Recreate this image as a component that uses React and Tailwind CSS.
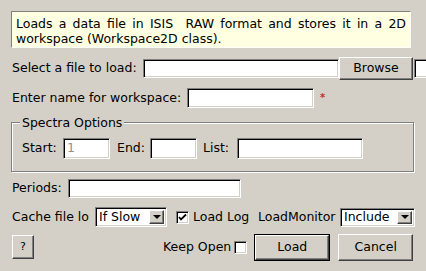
const sunken =
  "bg-white border border-t-[#808080] border-l-[#808080] border-b-white border-r-white shadow-[inset_1px_1px_0_#000,inset_-1px_-1px_0_#d4d0c8]";
const raised =
  "bg-[#d4d0c8] border border-t-white border-l-white border-b-[#404040] border-r-[#404040] shadow-[inset_-1px_-1px_0_#808080]";

function Field({ className = "", children }) {
  return (
    <div className={`${sunken} ${className} shrink-0 flex items-center px-[3px]`}>
      {children}
    </div>
  );
}

function Combo({ value, className = "" }) {
  return (
    <div className={`${sunken} ${className} shrink-0 flex items-center p-[2px]`}>
      <span className="flex-1 pl-[1px] leading-none">{value}</span>
      <div className={`${raised} w-[15px] h-full flex items-center justify-center`}>
        <div className="w-0 h-0 border-l-[4px] border-r-[4px] border-t-[4px] border-l-transparent border-r-transparent border-t-black" />
      </div>
    </div>
  );
}

function Check({ checked }) {
  return (
    <div className={`${sunken} w-[13px] h-[13px] flex items-center justify-center`}>
      {checked && (
        <svg width="9" height="9" viewBox="0 0 9 9">
          <path d="M1 4 L3 6.5 L8 1.5" stroke="#000" strokeWidth="1.8" fill="none" />
        </svg>
      )}
    </div>
  );
}

export default function App() {
  return (
    <div
      className="w-[426px] h-[271px] bg-[#d4d0c8] overflow-hidden text-black text-[12.5px]"
      style={{ fontFamily: '"DejaVu Sans", sans-serif' }}
    >
      <div className="ml-[11px] mt-[11px] w-[400px] h-[37px] bg-[#ffffe1] border border-[#808080] border-b-white border-r-white px-[4px] pt-[4px] leading-[15px] text-justify [text-align-last:left] whitespace-pre-wrap">
        Loads a data file in ISIS  RAW format and stores it in a 2D workspace (Workspace2D class).
      </div>

      <div className="flex items-center mt-[9px] h-[23px] whitespace-nowrap">
        <span className="ml-[12px] w-[131px] shrink-0">Select a file to load:</span>
        <Field className="w-[196px] h-[19px]" />
        <button className={`${raised} shrink-0 w-[74px] h-[23px]`}>Browse</button>
        <Field className="w-[40px] h-[19px] ml-[1px]" />
      </div>

      <div className="flex items-center mt-[8px] h-[20px] whitespace-nowrap">
        <span className="ml-[12px] w-[175px] shrink-0">Enter name for workspace:</span>
        <Field className="w-[127px] h-[20px]" />
        <span className="ml-[6px] text-[#c03030] text-[10px] font-bold leading-none">*</span>
      </div>

      <div className="relative ml-[11px] mt-[14px] w-[403px] h-[50px] border border-[#808080] shadow-[1px_1px_0_#fff,inset_1px_1px_0_#fff]">
        <span className="absolute -top-[8px] left-[8px] px-[2px] bg-[#d4d0c8] leading-[15px]">
          Spectra Options
        </span>
        <div className="flex items-center h-full pt-[2px] whitespace-nowrap">
          <span className="ml-[10px] w-[41px] shrink-0">Start:</span>
          <Field className="w-[47px] h-[21px] text-[#909090]">1</Field>
          <span className="ml-[7px] w-[33px] shrink-0">End:</span>
          <Field className="w-[47px] h-[21px]" />
          <span className="ml-[6px] w-[34px] shrink-0">List:</span>
          <Field className="w-[126px] h-[21px]" />
        </div>
      </div>

      <div className="flex items-center mt-[7px] h-[19px] whitespace-nowrap">
        <span className="ml-[12px] w-[56px] shrink-0">Periods:</span>
        <Field className="w-[173px] h-[19px]" />
      </div>

      <div className="flex items-center mt-[9px] h-[20px] whitespace-nowrap">
        <span className="ml-[12px] w-[83px] shrink-0 overflow-hidden">Cache file lo</span>
        <Combo value="If Slow" className="w-[72px] h-[20px]" />
        <div className="ml-[9px] shrink-0">
          <Check checked />
        </div>
        <span className="ml-[4px] w-[65px] shrink-0">Load Log</span>
        <span className="w-[82px] shrink-0 overflow-hidden">LoadMonitor</span>
        <Combo value="Include" className="w-[75px] h-[19px]" />
      </div>

      <div className="flex items-center mt-[6px] h-[28px] whitespace-nowrap">
        <button className={`${raised} shrink-0 ml-[12px] w-[22px] h-[24px] text-[11px]`}>?</button>
        <span className="ml-[129px] shrink-0">Keep Open</span>
        <div className="ml-[3px] shrink-0">
          <Check />
        </div>
        <div className="ml-[7px] shrink-0 border border-black">
          <button className={`${raised} w-[74px] h-[25px]`}>Load</button>
        </div>
        <button className={`${raised} shrink-0 ml-[8px] w-[75px] h-[27px]`}>Cancel</button>
      </div>
    </div>
  );
}
